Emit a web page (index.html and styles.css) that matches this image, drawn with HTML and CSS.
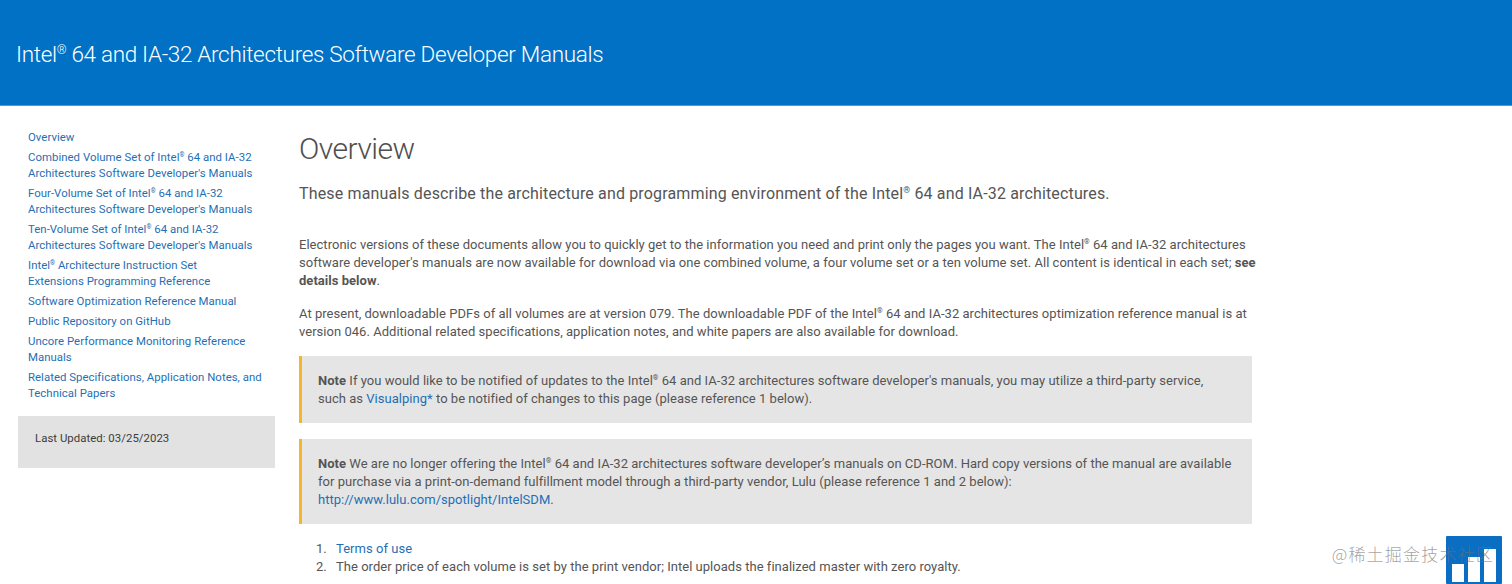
FILE: index.html
```html
<!DOCTYPE html>
<html lang="en">
<head>
    <meta charset="UTF-8">
    <title>Intel 64 and IA-32 Architectures Software Developer Manuals</title>
    <link rel="stylesheet" href="styles.css">
</head>
<body>

    <header class="banner">
        <h1>Intel<sup>®</sup> 64 and IA-32 Architectures Software Developer Manuals</h1>
    </header>

    <div class="container">
        <aside class="sidebar">
            <nav class="side-nav">
                <a href="#">Overview</a>
                <a href="#">Combined Volume Set of Intel<sup>®</sup> 64 and IA-32 Architectures Software Developer's Manuals</a>
                <a href="#">Four-Volume Set of Intel<sup>®</sup> 64 and IA-32 Architectures Software Developer's Manuals</a>
                <a href="#">Ten-Volume Set of Intel<sup>®</sup> 64 and IA-32 Architectures Software Developer's Manuals</a>
                <a href="#">Intel<sup>®</sup> Architecture Instruction Set<br>Extensions Programming Reference</a>
                <a href="#">Software Optimization Reference Manual</a>
                <a href="#">Public Repository on GitHub</a>
                <a href="#">Uncore Performance Monitoring Reference Manuals</a>
                <a href="#">Related Specifications, Application Notes, and Technical Papers</a>
            </nav>
            <div class="last-updated">Last Updated: 03/25/2023</div>
        </aside>

        <main class="content">
            <h2>Overview</h2>
            <p class="lead">These manuals describe the architecture and programming environment of the Intel<sup>®</sup> 64 and IA-32 architectures.</p>

            <p class="first">Electronic versions of these documents allow you to quickly get to the information you need and print only the pages you want. The Intel<sup>®</sup> 64 and IA-32 architectures software developer's manuals are now available for download via one combined volume, a four volume set or a ten volume set. All content is identical in each set; <b>see details below</b>.</p>
            <p>At present, downloadable PDFs of all volumes are at version 079. The downloadable PDF of the Intel<sup>®</sup> 64 and IA-32 architectures optimization reference manual is at version 046. Additional related specifications, application notes, and white papers are also available for download.</p>

            <div class="note first-note">
                <b>Note</b> If you would like to be notified of updates to the Intel<sup>®</sup> 64 and IA-32 architectures software developer's manuals, you may utilize a third-party service, such as <a href="#">Visualping*</a> to be notified of changes to this page (please reference 1 below).
            </div>
            <div class="note">
                <b>Note</b> We are no longer offering the Intel<sup>®</sup> 64 and IA-32 architectures software developer’s manuals on CD-ROM. Hard copy versions of the manual are available for purchase via a print-on-demand fulfillment model through a third-party vendor, Lulu (please reference 1 and 2 below): <a href="#">http://www.lulu.com/spotlight/IntelSDM</a>.
            </div>

            <ol class="refs">
                <li><a href="#">Terms of use</a></li>
                <li>The order price of each volume is set by the print vendor; Intel uploads the finalized master with zero royalty.</li>
            </ol>
        </main>
    </div>

    <!-- floating feedback widget + image watermark -->
    <div class="widget">
        <svg width="56" height="48" viewBox="0 0 56 48">
            <rect width="56" height="48" rx="1" fill="#0a6fc2"/>
            <rect x="6" y="28" width="12" height="18" fill="#fff"/>
            <rect x="22" y="21" width="12" height="25" fill="#fff"/>
            <rect x="38" y="13" width="12" height="33" fill="#fff"/>
        </svg>
    </div>
    <div class="watermark">@稀土掘金技术社区</div>

</body>
</html>
```

FILE: styles.css
```css
html, body {
    height: 100%;
}

body {
    margin: 0;
    font-family: 'Roboto', 'Noto Sans', sans-serif;
    font-size: 13px;
    line-height: 18px;
    letter-spacing: 0.03px;
    color: #555;
    background: #fff;
    overflow: hidden;
}

a {
    color: #1f6fb5;
    text-decoration: none;
}

sup {
    font-size: 0.55em;
    line-height: 1;
    vertical-align: 0.65em;
}

.banner {
    display: flex;
    align-items: center;
    height: 103px;
    padding: 2px 0 0 16px;
    background: #0071c5;
    border-bottom: 1px solid #4d9cdc;
}

.banner h1 {
    margin: 0;
    font-size: 22.5px;
    line-height: 30px;
    font-weight: 300;
    letter-spacing: -0.32px;
    color: #fff;
}

.container {
    display: flex;
    align-items: flex-start;
    padding-left: 18px;
}

.sidebar {
    flex: 0 0 257px;
    margin-right: 24px;
    padding-top: 23px;
}

.side-nav {
    display: flex;
    flex-direction: column;
    gap: 4px;
    padding: 0 10px 15px;
    font-size: 11.4px;
    line-height: 16px;
}

.last-updated {
    height: 52px;
    padding: 13px 17px 0;
    box-sizing: border-box;
    background: #e2e2e2;
    font-size: 11.4px;
    color: #3c3c3c;
}

.content {
    width: 957px;
}

.content h2 {
    margin: 25px 0 0;
    font-size: 30px;
    line-height: 36px;
    font-weight: 300;
    letter-spacing: -0.5px;
    color: #4f4f4f;
}

.content p {
    margin: 15px 0 0;
}

.content .lead {
    margin-top: 15px;
    font-size: 16px;
    line-height: 24px;
    letter-spacing: 0.15px;
}

.content .first {
    margin-top: 30px;
}

.note {
    margin: 16px 4px 0 0;
    padding: 16px 19px 15px 16px;
    background: #e5e5e5;
    border-left: 3px solid #f7b52c;
}

.first-note {
    margin-top: 15px;
}

.refs {
    margin: 16px 0 0;
    padding-left: 37px;
}

.refs li::marker {
    content: counter(list-item) ".\00a0\00a0\2009";
}

.widget {
    position: absolute;
    left: 1446px;
    top: 536px;
    line-height: 0;
}

.watermark {
    position: absolute;
    right: 18px;
    top: 541px;
    font-family: 'Noto Sans CJK SC', sans-serif;
    font-size: 17px;
    line-height: 26px;
    letter-spacing: 1.2px;
    font-weight: 300;
    color: rgba(110, 110, 110, 0.65);
}
```
